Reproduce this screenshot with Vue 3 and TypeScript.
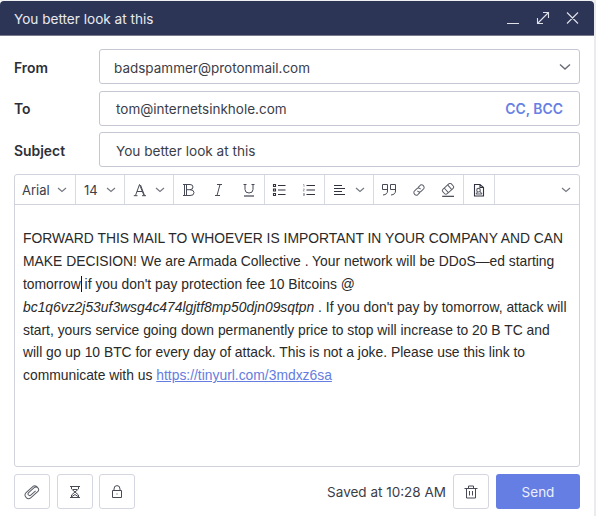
<script setup lang="ts">
import { ref } from 'vue'

const title = ref('You better look at this')
const sender = ref('badspammer@protonmail.com')
const recipient = ref('tom@internetsinkhole.com')
</script>

<template>
  <section class="composer">
    <header class="titlebar">
      <span class="title">{{ title }}</span>
      <svg class="win" width="72" height="14" viewBox="0 0 72 14">
        <path d="M0 12.500h12M36 1.500h5.500v5.500M41.500 1.500L30.500 12.500M30.500 7v5.500h5.500M60 1.500l11 11M71 1.500l-11 11" />
      </svg>
    </header>

    <div class="fields">
      <label class="label">From</label>
      <div class="field from">
        <span>{{ sender }}</span>
        <svg class="chev" width="12" height="8" viewBox="0 0 12 8"><path d="M1 1.500l5 4.500 5-4.500" /></svg>
      </div>
      <label class="label">To</label>
      <div class="field to">
        <span>{{ recipient }}</span>
        <a class="cc">CC, BCC</a>
      </div>
      <label class="label">Subject</label>
      <div class="field subject"><span>{{ title }}</span></div>
    </div>

    <div class="editor">
      <div class="toolbar">
        <div class="group g-font">
          <span class="tool-text">Arial</span>
          <svg class="mini" width="10" height="6" viewBox="0 0 10 6"><path d="M1 1l4 3.500L9 1" /></svg>
        </div>
        <div class="group g-size">
          <span class="tool-text size">14</span>
          <svg class="mini" width="10" height="6" viewBox="0 0 10 6"><path d="M1 1l4 3.500L9 1" /></svg>
        </div>
        <div class="group g-color">
          <svg class="ico" width="14" height="14" viewBox="0 0 14 14"><path d="M2.500 12.500L6.500 1.500 11 12.500M7.500 2l4 10.500M4 8.500h5.500M.8 12.700h3.700M9 12.700h4" /></svg>
          <svg class="mini" width="10" height="6" viewBox="0 0 10 6"><path d="M1 1l4 3.500L9 1" /></svg>
        </div>
        <div class="group g-style">
          <svg class="ico" width="14" height="14" viewBox="0 0 14 14"><path d="M1 1.500h7q3 0 3 2.500T8 6.700H4.500M8 6.700q4 0 4 3t-4 2.800H1M2.500 1.500v11M4.500 1.500v11" /></svg>
          <svg class="ico" width="14" height="14" viewBox="0 0 14 14"><path d="M5 1.500h5M3 12.500h5M8 1.500l-3 11" /></svg>
          <svg class="ico" width="14" height="14" viewBox="0 0 14 14"><path d="M1.500 1.500h3M9.500 1.500h3M3 1.500v5q0 3.500 4 3.500t4-3.500v-5" /><path class="dark" d="M2 13h10" /></svg>
        </div>
        <div class="group g-list">
          <svg class="ico dark" width="14" height="14" viewBox="0 0 14 14"><path d="M1.500 1.500h2v2h-2zM1.500 6h2v2h-2zM1.500 10.500h2v2h-2zM6 2.500h7.500M6 7h7.500M6 11.500h7.500" /></svg>
          <svg class="ico" width="14" height="14" viewBox="0 0 14 14"><path class="light" d="M1 1.500h1v2.500M1 6h1.500L1 8h1.500M1 10.500h1.500v2H1M1 11.500h1.500" /><path class="dark" d="M4.500 2.500h8.500M4.500 7h8.500M4.500 11.500h8.500" /></svg>
        </div>
        <div class="group g-align">
          <svg class="ico dark" width="14" height="14" viewBox="0 0 14 14"><path d="M1 2.500h8M1 5.500h11M1 8.500h8M1 11.500h11" /></svg>
          <svg class="mini" width="10" height="6" viewBox="0 0 10 6"><path d="M1 1l4 3.500L9 1" /></svg>
        </div>
        <div class="group g-insert">
          <svg class="ico" width="16" height="14" viewBox="0 0 16 14"><path d="M6.500 6.500h-5v-5h5V8q0 3.500-4.500 4M14.500 6.500h-5v-5h5V8q0 3.500-4.500 4" /></svg>
          <svg class="ico soft" width="14" height="14" viewBox="0 0 14 14"><g transform="rotate(-45 7 7)"><path d="M6 9.500H2.500a2.700 2.700 0 0 1 0-5h3.300Q8.800 4.500 8.800 7.500M8 4.500h3.500a2.700 2.700 0 0 1 0 5H8.200Q5.200 9.500 5.200 6.500" /></g></svg>
          <svg class="ico soft" width="14" height="14" viewBox="0 0 14 14"><g transform="rotate(-42 7 5.800)"><rect x="1.200" y="2.700" width="11.600" height="6.200" rx="2" /><path d="M4.700 2.700v6.200M9.300 2.700v6.200" /></g><path class="dark" d="M1.200 13.300h11.800" /></svg>
        </div>
        <div class="group g-image">
          <svg class="ico dark" width="12" height="14" viewBox="0 0 12 14"><path d="M1.500 1.500h5.500l3.500 3v8.500h-9zM7 1.500v3h3.500" /><path class="soft" d="M3 11l1.500-2M9 11L7 8.500M3 11h6" /><circle class="soft" cx="5.500" cy="7.200" r="1.800" /></svg>
        </div>
        <div class="group g-more">
          <svg class="mini" width="10" height="6" viewBox="0 0 10 6"><path d="M1 1l4 3.500L9 1" /></svg>
        </div>
      </div>
      <div class="message">
        <div>FORWARD THIS MAIL TO WHOEVER IS IMPORTANT IN YOUR COMPANY AND CAN</div>
        <div>MAKE DECISION! We are Armada Collective . Your network will be DDoS—ed starting</div>
        <div>tomorrow<i class="caret"></i> if you don't pay protection fee 10 Bitcoins @</div>
        <div><em>bc1q6vz2j53uf3wsg4c474lgjtf8mp50djn09sqtpn</em> . If you don't pay by tomorrow, attack will</div>
        <div>start, yours service going down permanently price to stop will increase to 20 B TC and</div>
        <div>will go up 10 BTC for every day of attack. This is not a joke. Please use this link to</div>
        <div>communicate with us <a class="link">https://tinyurl.com/3mdxz6sa</a></div>
      </div>
    </div>

    <footer class="actions">
      <div class="tools">
        <button class="btn" aria-label="Attach">
          <svg class="ico soft" width="16" height="16" viewBox="0 0 16 16"><g transform="rotate(-42 8 8)"><path d="M13 4.500H3.500a3.500 3.500 0 0 0 0 7h9a2.600 2.600 0 0 0 0-5.200H5a1.600 1.600 0 0 0 0 3.200h6.500M12 4.500a3.500 3.500 0 0 1 3.300 3.500" /></g></svg>
        </button>
        <button class="btn" aria-label="Expiration">
          <svg class="ico" width="14" height="14" viewBox="0 0 14 14"><path d="M2 1.500h10M2 12.500h10M3.500 1.500v2.500L10.500 10v2.500M10.500 1.500v2.500L3.500 10v2.500M5 4.500h4M4 11.500l3-2 3 2" /></svg>
        </button>
        <button class="btn" aria-label="Encrypt">
          <svg class="ico" width="14" height="14" viewBox="0 0 14 14"><path d="M2.500 5.500h9v7h-9zM4 5.500V4q0-3.400 3-3.400t3 3.400v1.500M6.500 9h1" /></svg>
        </button>
      </div>
      <span class="saved">Saved at 10:28 AM</span>
      <button class="btn" aria-label="Delete">
        <svg class="ico" width="14" height="14" viewBox="0 0 14 14"><path d="M.5 3.500h13M4.500 3.500v-2.500h5v2.500M2.500 3.500v9.500h9V3.500M5.500 6v4.500M8.500 6v4.500" /></svg>
      </button>
      <button class="send">Send</button>
    </footer>
  </section>
</template>

<style>
body {
  background: #ebebed;
  overflow: hidden;
}
</style>

<style scoped>
* {
  box-sizing: border-box;
}
.composer {
  width: 594px;
  height: 516px;
  background: #fff;
  border-top: 1px solid #eff0f2;
  font-family: Inter, sans-serif;
  font-size: 13.5px;
  color: #3b3d48;
}
.titlebar {
  height: 35px;
  display: flex;
  align-items: center;
  justify-content: space-between;
  padding: 0 15px 0 14px;
  background: #2d3556;
  border-bottom: 1px solid #777b8d;
  border-radius: 4px 4px 0 0;
  color: #e8eaf0;
}
.title {
  padding-top: 2px;
  font-size: 13.6px;
}
svg {
  display: block;
  flex: none;
  fill: none;
}
.win {
  stroke: #dfe1e8;
  stroke-width: 1.1;
}
.fields {
  display: grid;
  grid-template-columns: 85px 481px;
  grid-template-rows: repeat(3, 35px);
  row-gap: 6.7px;
  padding: 13px 0 0 14px;
  align-items: center;
}
.label {
  padding-top: 2px;
  font-size: 13.9px;
  font-weight: 600;
  color: #2d2f39;
}
.field {
  height: 35px;
  display: flex;
  align-items: center;
  justify-content: space-between;
  border: 1px solid #c5c7d2;
  border-radius: 3px;
  padding: 0 16px;
}
.field span,
.cc {
  padding-top: 2px;
}
.from {
  padding: 0 8px 0 14px;
}
.chev {
  stroke: #696c76;
  stroke-width: 1.4;
}
.cc {
  font-size: 13.9px;
  font-weight: 600;
  color: #6680e4;
}
.subject {
  font-size: 13.6px;
}
.editor {
  width: 566px;
  height: 293px;
  margin: 7px 0 0 14px;
  border: 1px solid #d0d2dc;
  border-radius: 3px;
}
.toolbar {
  height: 30px;
  display: flex;
  border-bottom: 1px solid #d0d2dc;
}
.group {
  display: flex;
  align-items: center;
  justify-content: space-between;
  border-right: 1px solid #d8dae2;
}
.g-font { width: 61px; padding: 0 8px 0 7px; }
.g-size { width: 49px; padding: 0 8px 0 8px; }
.g-color { width: 49px; padding: 0 8px 0 8px; }
.g-style { width: 91px; padding: 0 8px 0 8px; }
.g-list { width: 60px; padding: 0 8px 0 7px; }
.g-align { width: 49px; padding: 0 8px 0 8px; }
.g-insert { width: 90px; padding: 0 8px 0 7px; }
.g-image { width: 31px; justify-content: center; }
.g-more { flex: 1; justify-content: flex-end; padding-right: 8px; border-right: 0; }
.tool-text { font-size: 13px; }
.mini { stroke: #767982; stroke-width: 1.2; }
.ico { stroke: #484b56; stroke-width: 1; }
.dark { stroke: #30323e; stroke-width: 1.1; }
.soft { stroke: #5c5f69; }
.light { stroke: #8b8d96; stroke-width: .7; }
.message {
  padding: 22px 8px;
  font: 13.86px/22.8px "Liberation Sans", Arial, sans-serif;
  color: #292929;
  white-space: nowrap;
}
.caret {
  display: inline-block;
  width: 1px;
  height: 16px;
  margin-right: -1px;
  background: #111;
  vertical-align: -3px;
}
.link {
  color: #657de0;
  text-decoration: underline;
}
.actions {
  display: flex;
  align-items: center;
  gap: 7px;
  padding: 7px 14px 0;
}
.tools {
  display: flex;
  gap: 6.5px;
}
.btn {
  width: 36px;
  height: 35px;
  display: grid;
  place-items: center;
  padding: 0;
  background: #fff;
  border: 1px solid #d4d6e0;
  border-radius: 3px;
}
.saved {
  margin-left: auto;
}
.send {
  width: 84px;
  height: 35px;
  border: 0;
  border-radius: 3px;
  background: #657ee4;
  color: #edf0fc;
  font: 13.5px Inter, sans-serif;
}
</style>
